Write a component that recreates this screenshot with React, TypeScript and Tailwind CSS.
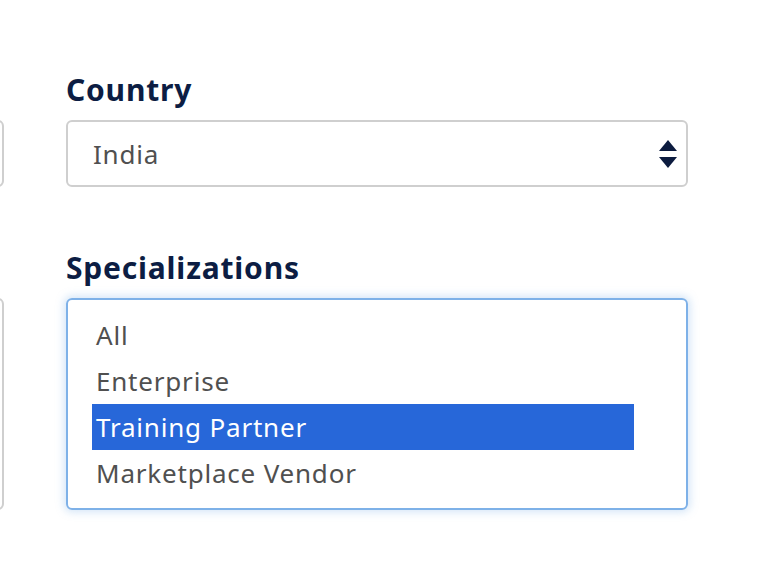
import React from "react"

const OPTIONS = ["All", "Enterprise", "Training Partner", "Marketplace Vendor"]

function SortArrows() {
  return (
    <svg width="20" height="30" viewBox="0 0 20 30" className="shrink-0">
      <path d="M10 1 L19 12 H1 Z" fill="#0c1b3f" />
      <path d="M10 29 L19 18 H1 Z" fill="#0c1b3f" />
    </svg>
  )
}

export default function App() {
  return (
    <div
      className="w-[772px] h-[584px] bg-white overflow-hidden relative"
      style={{ fontFamily: "'Noto Sans', 'Open Sans', sans-serif" }}
    >
      {/* left column, cut off by the viewport */}
      <div className="absolute left-[-300px] top-[120px] w-[304px] h-[67px] border-2 border-[#cfcfcf] rounded-[6px]" />
      <div className="absolute left-[-300px] top-[298px] w-[304px] h-[212px] border-2 border-[#cfcfcf] rounded-[6px]" />

      <div className="pl-[66px] pt-[70px] w-[688px] flex flex-col">
        <label className="text-[30px] font-bold tracking-[0.8px] text-[#0c1d43] leading-[40px] h-[50px]">Country</label>
        <div className="h-[67px] border-2 border-[#cfcfcf] rounded-[6px] flex items-center justify-between pl-[25px] pr-[8px]">
          <span className="text-[26px] tracking-[0.8px] text-[#505050] pt-[2px]">India</span>
          <SortArrows />
        </div>

        <label className="mt-[61px] text-[30px] font-bold tracking-[0.8px] text-[#0c1d43] leading-[40px] h-[50px]">
          Specializations
        </label>
        <div className="h-[212px] border-2 border-[#7eb1e8] rounded-[6px] shadow-[0_0_8px_2px_rgba(126,177,232,0.35)] pt-[12px] pl-[24px] pr-[52px]">
          {OPTIONS.map((o) => (
            <div
              key={o}
              className={
                o === "Training Partner"
                  ? "h-[46px] flex items-center px-[4px] text-[26px] tracking-[0.8px] bg-[#2767d9] text-white"
                  : "h-[46px] flex items-center px-[4px] text-[26px] tracking-[0.8px] text-[#505050]"
              }
            >
              {o}
            </div>
          ))}
        </div>
      </div>
    </div>
  )
}
